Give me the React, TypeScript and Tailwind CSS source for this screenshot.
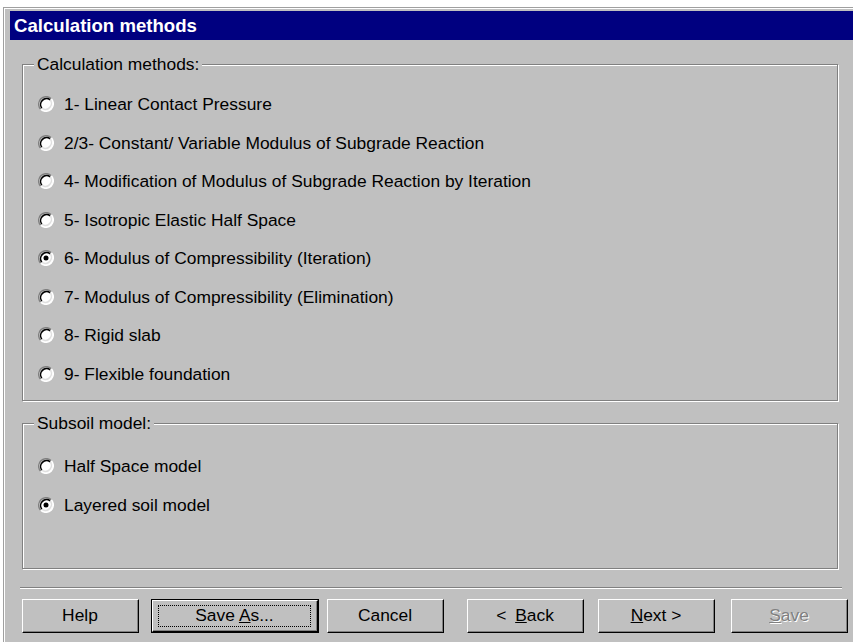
import React from "react";

const METHODS = [
  "1- Linear Contact Pressure",
  "2/3- Constant/ Variable Modulus of Subgrade Reaction",
  "4- Modification of Modulus of Subgrade Reaction by Iteration",
  "5- Isotropic Elastic Half Space",
  "6- Modulus of Compressibility (Iteration)",
  "7- Modulus of Compressibility (Elimination)",
  "8- Rigid slab",
  "9- Flexible foundation",
];

const MODELS = ["Half Space model", "Layered soil model"];

// classic sunken radio circle
const RadioDot = ({ checked }: { checked: boolean }) => (
  <svg width="16" height="16" viewBox="0 0 16 16" className="shrink-0 block">
    <circle cx="8" cy="8" r="7" fill="#fff" />
    <path d="M13.3 2.7 A7.5 7.5 0 0 0 2.7 13.3" stroke="#808080" strokeWidth="1.5" fill="none" />
    <path d="M12.2 3.8 A6 6 0 0 0 3.8 12.2" stroke="#000" strokeWidth="1.6" fill="none" />
    <path d="M2.7 13.3 A7.5 7.5 0 0 0 13.3 2.7" stroke="#fff" strokeWidth="1.5" fill="none" />
    <path d="M3.8 12.2 A6 6 0 0 0 12.2 3.8" stroke="#dfdfdf" strokeWidth="1.5" fill="none" />
    {checked && <circle cx="8" cy="8" r="2.5" fill="#000" />}
  </svg>
);

const Radio = ({ label, checked }: { label: string; checked: boolean }) => (
  <div className="flex items-center h-[38.5px] pl-[15px] gap-[10px]">
    <RadioDot checked={checked} />
    <span>{label}</span>
  </div>
);

const Group = ({
  title,
  className,
  children,
}: {
  title: string;
  className: string;
  children: React.ReactNode;
}) => (
  <div
    className={`relative ml-[18px] w-[816px] border border-[#808080] shadow-[inset_1px_1px_0_#fff,1px_1px_0_#fff] ${className}`}
  >
    <span className="absolute left-[11px] -top-[12px] px-[3px] bg-[#c0c0c0] leading-[22px]">
      {title}
    </span>
    {children}
  </div>
);

const Button = ({
  children,
  primary,
  disabled,
  className = "",
}: {
  children: React.ReactNode;
  primary?: boolean;
  disabled?: boolean;
  className?: string;
}) => (
  <button
    className={`h-[34px] bg-[#c0c0c0] p-0 ${primary ? "border border-black" : ""} ${className}`}
  >
    <div className="h-full w-full border-t border-l border-white border-r border-b border-r-black border-b-black">
      <div className="h-full w-full border-r border-b border-[#808080] flex items-center justify-center">
        {primary ? (
          <span className="flex items-center justify-center w-[calc(100%-10px)] h-[22px] border border-dotted border-black">
            {children}
          </span>
        ) : (
          <span
            className={
              disabled ? "text-[#808080] [text-shadow:1px_1px_0_#fff]" : ""
            }
          >
            {children}
          </span>
        )}
      </div>
    </div>
  </button>
);

export default function App() {
  return (
    <div className="w-[853px] h-[642px] bg-white pt-[7px] pl-[3px] overflow-hidden font-['Liberation_Sans',Arial,sans-serif] text-[17.4px] text-black">
      <div className="h-full border-t border-l border-[#a0a0a0] bg-[#c0c0c0] shadow-[inset_1px_1px_0_#fff]">
        <div className="ml-[6px] mt-[3px] h-[29px] bg-[#000080] flex items-center pl-[4px] text-white font-bold text-[18.6px]">
          Calculation methods
        </div>

        <Group title="Calculation methods:" className="mt-[24px] h-[337px] pt-[20px]">
          {METHODS.map((m, i) => (
            <Radio key={i} label={m} checked={i === 4} />
          ))}
        </Group>

        <Group title="Subsoil model:" className="mt-[22px] h-[146px] pt-[23px]">
          {MODELS.map((m, i) => (
            <Radio key={i} label={m} checked={i === 1} />
          ))}
        </Group>

        <div className="ml-[16px] w-[822px] mt-[18px] border-t border-[#808080] border-b border-b-white" />

        <div className="flex items-center mt-[10px] ml-[18px]">
          <Button className="w-[117px]">Help</Button>
          <Button primary className="w-[168px] ml-[12px]">
            Save <u className="ml-[4px]">A</u>s...
          </Button>
          <Button className="w-[117px] ml-[8px]">Cancel</Button>
          <Button className="w-[117px] ml-[23px]">
            &lt; <u className="ml-[4px]">B</u>ack
          </Button>
          <Button className="w-[117px] ml-[14px]">
            <u>N</u>ext &gt;
          </Button>
          <Button disabled className="w-[117px] ml-[16px]">
            <u>S</u>ave
          </Button>
        </div>
      </div>
    </div>
  );
}
